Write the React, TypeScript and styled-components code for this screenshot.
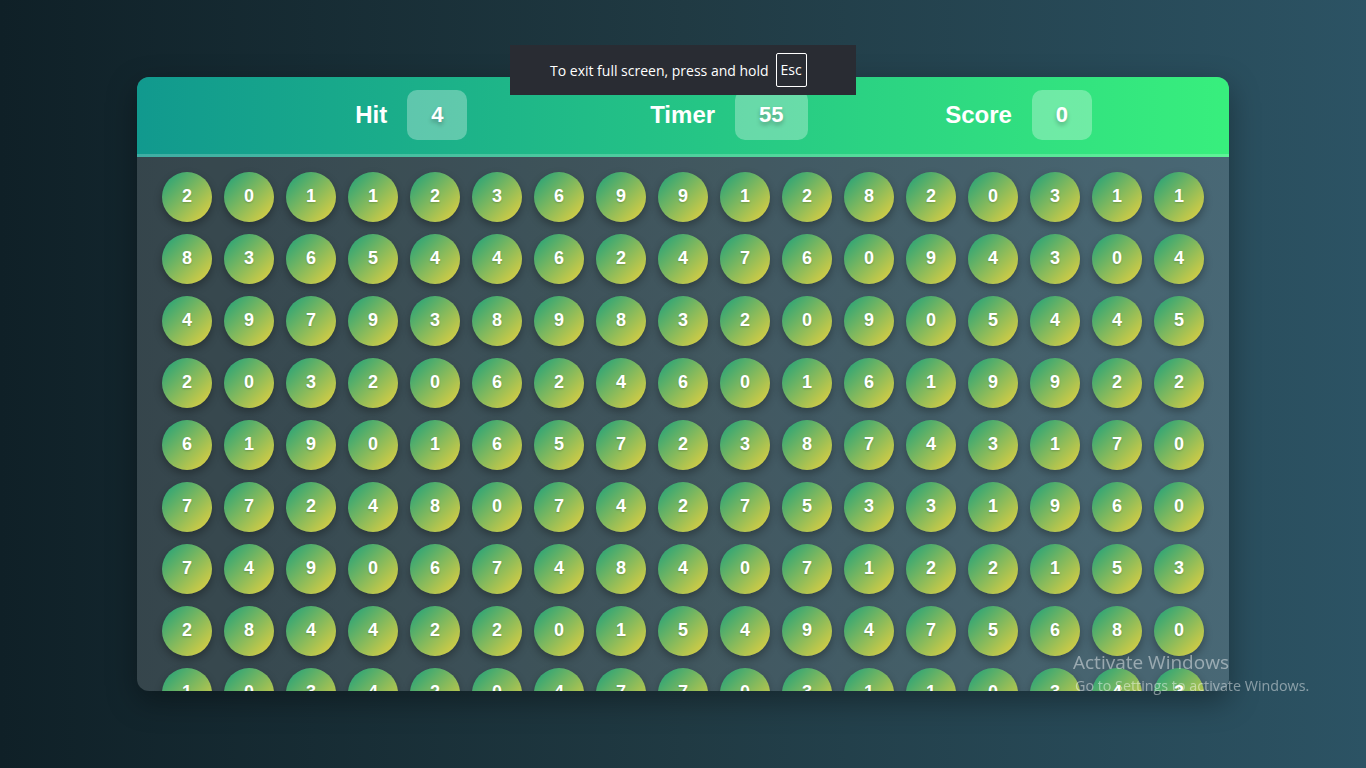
import React from "react";
import styled, { createGlobalStyle } from "styled-components";

const GlobalStyle = createGlobalStyle`
  html, body {
    margin: 0;
    padding: 0;
    height: 100%;
  }
  body {
    font-family: "Liberation Sans", Arial, sans-serif;
    background: linear-gradient(to right, #0f2027, #203a43, #2c5364);
    overflow: hidden;
  }
`;

const Page = styled.div`
  width: 100vw;
  height: 100vh;
  display: flex;
  align-items: center;
  justify-content: center;
`;

const Card = styled.div`
  width: 80%;
  height: 80%;
  display: flex;
  flex-direction: column;
  border-radius: 12px;
  overflow: hidden;
  background: rgba(255, 255, 255, 0.15);
  box-shadow: 0 10px 30px rgba(0, 0, 0, 0.35);
`;

const Header = styled.div`
  height: 77px;
  flex-shrink: 0;
  display: flex;
  align-items: center;
  padding-left: 20%;
  background: linear-gradient(to right, #11998e, #38ef7d);
  border-bottom: 3px solid rgba(255, 255, 255, 0.2);
`;

const Stat = styled.div`
  flex: 0 0 295px;
  display: flex;
  align-items: center;
  gap: 20px;
  color: #fff;
  font-size: 24px;
  font-weight: 700;
`;

const StatBox = styled.div`
  height: 50px;
  padding: 0 24px;
  display: flex;
  align-items: center;
  border-radius: 10px;
  background: rgba(255, 255, 255, 0.3);
  font-size: 22px;
  font-weight: 700;
  text-shadow: 0 3px 4px rgba(0, 0, 0, 0.25);
`;

const Board = styled.div`
  flex: 1;
  overflow: hidden;
  padding: 15px 25px;
  display: grid;
  grid-template-columns: repeat(17, 50px);
  grid-auto-rows: 50px;
  gap: 12px;
  justify-content: center;
`;

const Bubble = styled.div`
  width: 50px;
  height: 50px;
  border-radius: 50%;
  display: flex;
  align-items: center;
  justify-content: center;
  color: #fff;
  font-size: 18px;
  font-weight: 700;
  background: linear-gradient(to bottom right, #1aa07c, #ead23e);
  box-shadow: 0 4px 8px rgba(0, 0, 0, 0.3);
  text-shadow: 0 1px 2px rgba(0, 0, 0, 0.2);
`;

const Toast = styled.div`
  position: fixed;
  top: 45px;
  left: 510px;
  width: 346px;
  height: 50px;
  box-sizing: border-box;
  padding-left: 40px;
  display: flex;
  align-items: center;
  gap: 7px;
  background: #292c33;
  color: #fff;
  font-family: "Open Sans", "Noto Sans", sans-serif;
  font-size: 14px;
`;

const Key = styled.span`
  border: 1px solid #fff;
  border-radius: 2px;
  padding: 7px 4px;
  line-height: 18px;
`;

const Watermark = styled.div`
  position: fixed;
  left: 1073px;
  top: 649px;
  color: rgba(255, 255, 255, 0.45);
  font-family: "Open Sans", "Noto Sans", sans-serif;
  pointer-events: none;
  h4 {
    margin: 0;
    font-size: 19px;
    font-weight: 400;
  }
  p {
    margin: 1px 0 0 2px;
    font-size: 14.3px;
  }
`;

const rows = [
  "20112369912820311",
  "83654462476094304",
  "49793898320905445",
  "20320624601619922",
  "61901657238743170",
  "77248074275331960",
  "74906748407122153",
  "28442201549475680",
  "10342047703110343",
  "52718360492816407",
];

export default function App() {
  return (
    <>
      <GlobalStyle />
      <Page>
        <Card>
          <Header>
            <Stat>
              Hit <StatBox>4</StatBox>
            </Stat>
            <Stat>
              Timer <StatBox>55</StatBox>
            </Stat>
            <Stat>
              Score <StatBox>0</StatBox>
            </Stat>
          </Header>
          <Board>
            {rows.map((row, r) =>
              row.split("").map((d, c) => <Bubble key={`${r}-${c}`}>{d}</Bubble>)
            )}
          </Board>
        </Card>
      </Page>
      <Toast>
        To exit full screen, press and hold <Key>Esc</Key>
      </Toast>
      <Watermark>
        <h4>Activate Windows</h4>
        <p>Go to Settings to activate Windows.</p>
      </Watermark>
    </>
  );
}
